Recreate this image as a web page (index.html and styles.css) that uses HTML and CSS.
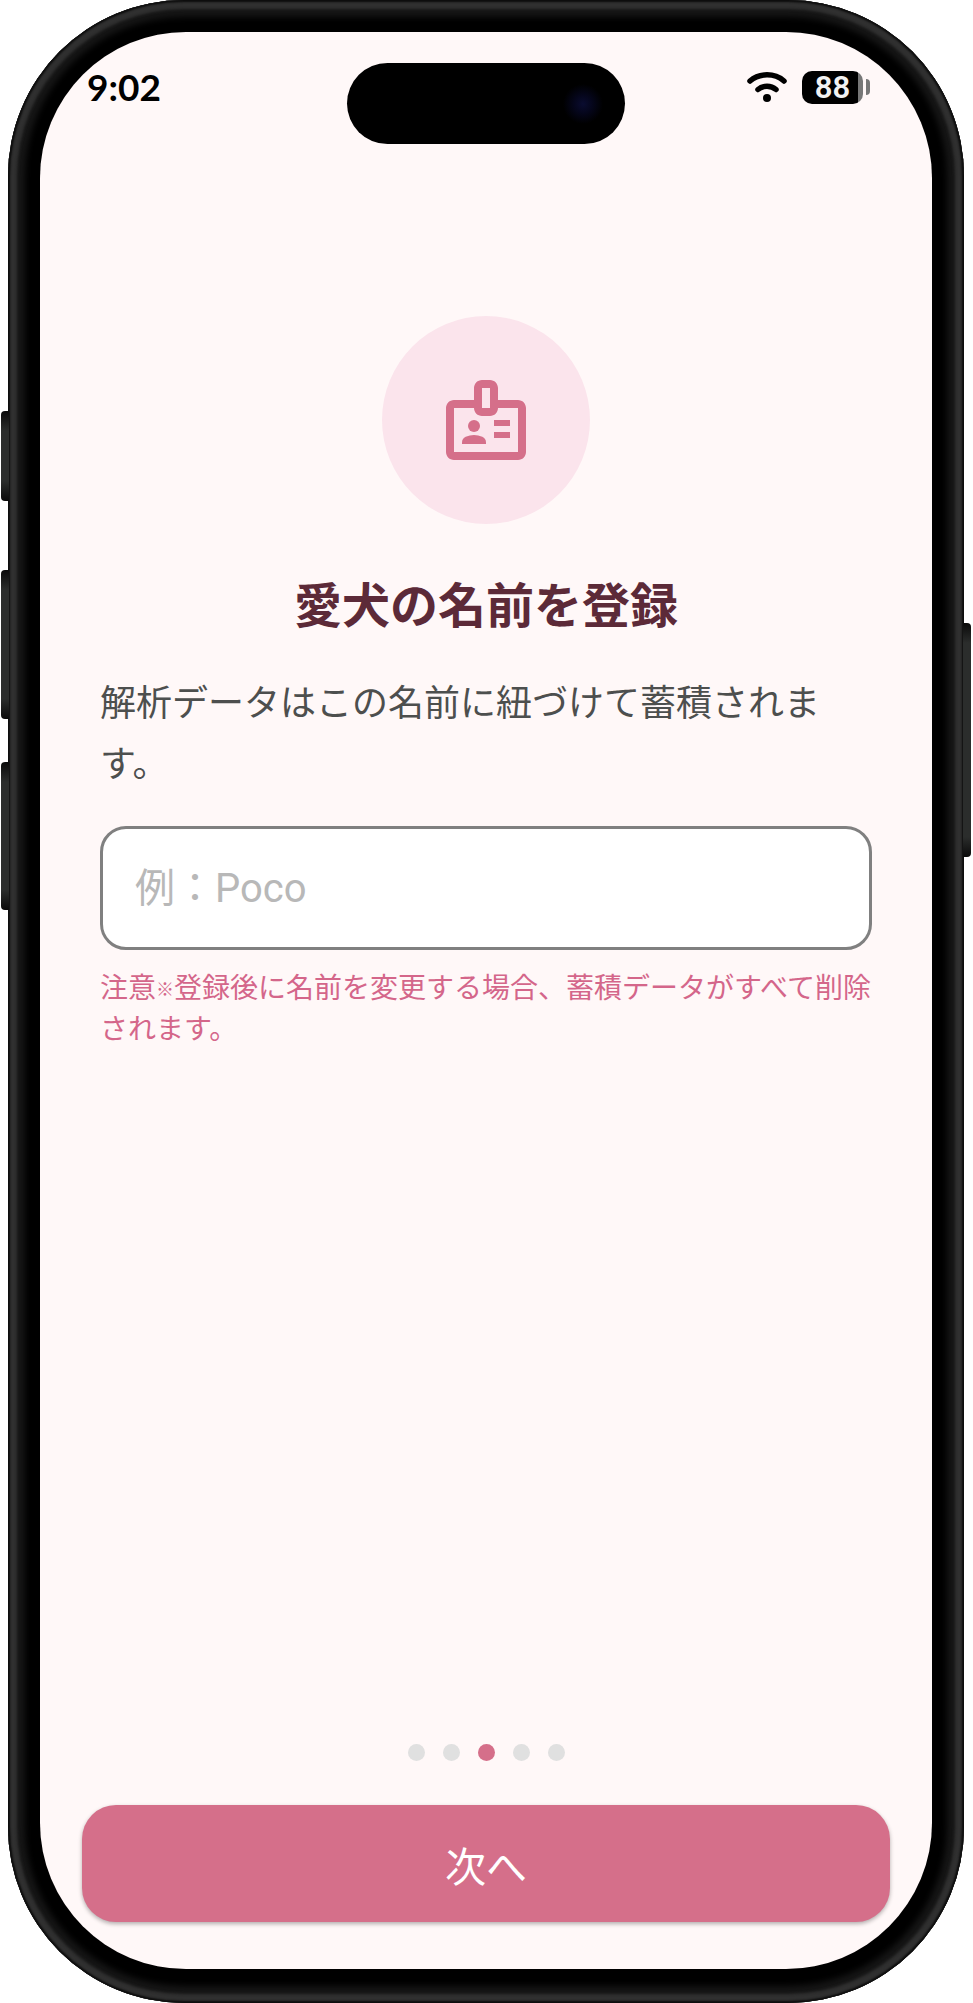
FILE: index.html
```
<!DOCTYPE html>
<html lang="ja">
<head>
    <meta charset="UTF-8">
    <meta name="viewport" content="width=device-width, initial-scale=1.0">
    <title>愛犬の名前を登録</title>
    <link rel="stylesheet" href="styles.css">
</head>
<body>
    <div class="phone">
        <span class="side-button action"></span>
        <span class="side-button volume-up"></span>
        <span class="side-button volume-down"></span>
        <span class="side-button power"></span>

        <div class="screen">
            <div class="island"></div>

            <header class="status-bar">
                <span class="clock">9:02</span>
                <div class="status-icons">
                    <svg class="wifi" viewBox="0 0 40 30" fill="none" stroke="#000" stroke-linecap="round">
                        <path d="M3 9C12.500 .8 27.500 .8 37 9" stroke-width="5.500"/>
                        <path d="M11 17.500C16 13.300 24 13.300 29 17.500" stroke-width="5.500"/>
                        <circle cx="20" cy="26" r="4" fill="#000" stroke="none"/>
                    </svg>
                    <div class="battery">
                        <span class="battery-level">88</span>
                        <span class="battery-tip"></span>
                    </div>
                </div>
            </header>

            <main class="content">
                <div class="icon-circle">
                    <svg class="badge-icon" viewBox="0 0 24 24" fill="currentColor" fill-rule="evenodd">
                        <path d="M9 7V4c0-1.100.9-2 2-2h2c1.100 0 2 .9 2 2v3h5c1.100 0 2 .9 2 2v11c0 1.100-.9 2-2 2H4c-1.100 0-2-.9-2-2V9c0-1.100.9-2 2-2zM11 4v5h2V4zM9 9H4v11h16V9h-5c0 1.100-.9 2-2 2h-2c-1.100 0-2-.9-2-2z"/>
                        <circle cx="9" cy="13.500" r="1.500"/>
                        <path d="M6 18v-.43c0-.6.36-1.150.92-1.390a5.300 5.300 0 0 1 4.160 0c.56.24.92.78.92 1.390V18z"/>
                        <path d="M14 12h4v1.500h-4zM14 15h4v1.500h-4z"/>
                    </svg>
                </div>

                <h1 class="title">愛犬の名前を登録</h1>
                <label class="description" for="dogName">解析データはこの名前に紐づけて蓄積されます。</label>
                <input class="name-input" id="dogName" type="text" placeholder="例：Poco">
                <p class="note">注意<span class="note-mark">※</span>登録後に名前を変更する場合、蓄積データがすべて削除<br>されます。</p>
            </main>

            <footer class="footer">
                <div class="dots">
                    <span class="dot"></span>
                    <span class="dot"></span>
                    <span class="dot active"></span>
                    <span class="dot"></span>
                    <span class="dot"></span>
                </div>
                <button class="next-button" type="button">次へ</button>
            </footer>
        </div>
    </div>
</body>
</html>
```
FILE: styles.css
```
* {
    box-sizing: border-box;
}

body {
    margin: 0;
    background: #fff;
    font-family: Roboto, 'Noto Sans CJK JP', sans-serif;
}

.phone {
    position: relative;
    display: flex;
    min-height: 100vh;
    margin: 0 9px 0 8px;
    padding: 32px 32px 34px;
    border-radius: 176px;
    background: #000;
    box-shadow:
        inset 0 0 2px 2px #0c0c0c,
        inset 0 0 3px 9px #303030,
        inset 0 0 6px 17px #161616;
}

/* hardware buttons on the frame */
.side-button {
    position: absolute;
    left: -7px;
    width: 8px;
    border-radius: 4px 0 0 4px;
    background: linear-gradient(#0a0a0a, #2b2d2c 20px, #2b2d2c calc(100% - 20px), #0a0a0a);
}

.action {
    top: 411px;
    height: 90px;
}

.volume-up {
    top: 570px;
    height: 149px;
}

.volume-down {
    top: 762px;
    height: 148px;
}

.power {
    top: 623px;
    left: auto;
    right: -7px;
    height: 234px;
    border-radius: 0 4px 4px 0;
}

.screen {
    position: relative;
    display: flex;
    flex: 1;
    flex-direction: column;
    min-width: 0;
    border-radius: 146px;
    background: #fff8f8;
}

.island {
    position: absolute;
    top: 31px;
    left: 50%;
    width: 278px;
    height: 81px;
    transform: translateX(-50%);
    border-radius: 41px;
    background: radial-gradient(circle at 236px 41px, #0a0c30 0, #05061c 9px, #000 20px);
}

.status-bar {
    display: flex;
    justify-content: space-between;
    align-items: center;
    height: 110px;
    padding: 0 62px 0 47px;
}

.clock {
    font-family: Lato, sans-serif;
    font-size: 37px;
    font-weight: 700;
    line-height: 40px;
}

.status-icons {
    display: flex;
    align-items: center;
    gap: 15px;
}

.wifi {
    width: 40px;
    height: 30px;
}

.battery {
    display: flex;
    align-items: center;
    gap: 3px;
}

.battery-level {
    width: 61px;
    height: 33px;
    border-radius: 10px;
    background: linear-gradient(90deg, #000 56px, #777 56px);
    color: #f2f2f2;
    font-size: 31px;
    font-weight: 600;
    line-height: 34px;
    text-align: center;
}

.battery-tip {
    width: 4px;
    height: 16px;
    border-radius: 0 4px 4px 0;
    background: #777;
}

.content {
    display: flex;
    flex: 1;
    flex-direction: column;
    padding: 174px 60px 0;
}

.icon-circle {
    display: flex;
    justify-content: center;
    align-items: center;
    align-self: center;
    width: 208px;
    height: 208px;
    border-radius: 50%;
    background: #fbe4ec;
    color: #d56f8a;
}

.badge-icon {
    width: 96px;
    height: 96px;
}

.title {
    margin: 48px 0 32px;
    color: #5c2a38;
    font-size: 48px;
    font-weight: 700;
    line-height: 70px;
    text-align: center;
}

.description {
    color: #4d4f4e;
    font-size: 36px;
    line-height: 61px;
}

.name-input {
    width: 100%;
    height: 124px;
    margin: 30px 0 18px;
    padding: 0 32px;
    border: 3px solid #808080;
    border-radius: 26px;
    background: #fff;
    color: #4d4f4e;
    font-family: inherit;
    font-size: 40px;
}

.name-input::placeholder {
    color: #b8b8b8;
    opacity: 1;
}

.note {
    margin: 0 -8px 0 0;
    color: #d4668a;
    font-size: 28px;
    line-height: 41px;
}

.note-mark {
    font-size: 18px;
    line-height: 1;
    vertical-align: 2px;
}

.footer {
    padding: 0 42px 47px;
}

.dots {
    display: flex;
    justify-content: center;
    gap: 18px;
    margin-bottom: 44px;
}

.dot {
    width: 17px;
    height: 17px;
    border-radius: 50%;
    background: #e0e0e0;
}

.dot.active {
    background: #d56f8a;
}

.next-button {
    display: block;
    width: 100%;
    height: 117px;
    border: 0;
    border-radius: 34px;
    background: #d56f8a;
    box-shadow: 0 2px 4px rgba(0, 0, 0, 0.3);
    color: #fff;
    font-family: inherit;
    font-size: 41px;
    font-weight: 400;
}
```
